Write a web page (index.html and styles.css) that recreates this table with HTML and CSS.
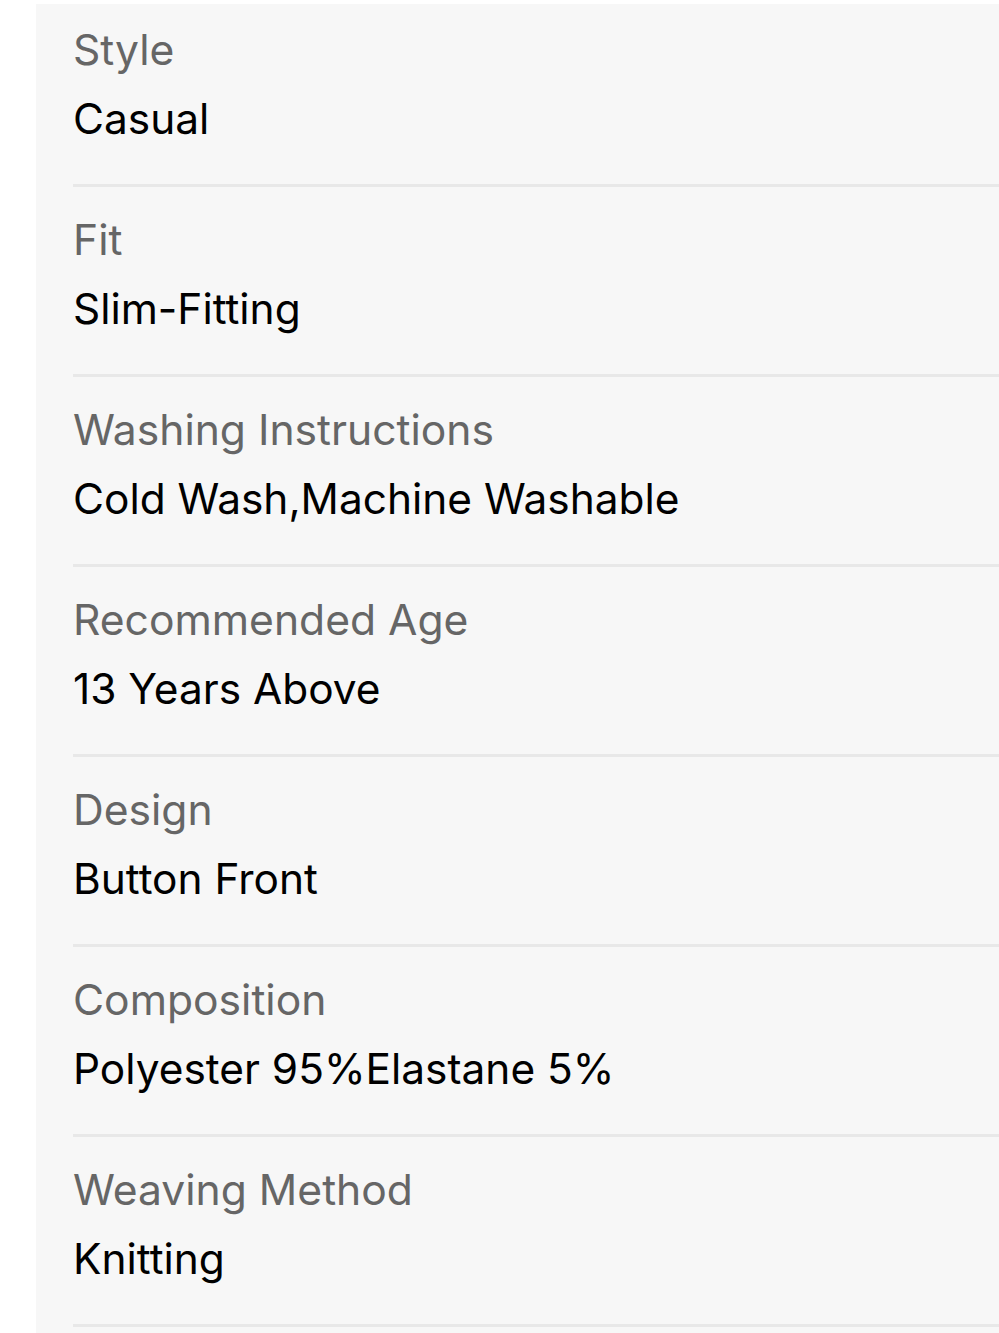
FILE: index.html
```html
<!DOCTYPE html>
<html lang="en">
<head>
    <meta charset="UTF-8">
    <meta name="viewport" content="width=device-width, initial-scale=1.0">
    <title>Product Details</title>
    <link rel="stylesheet" href="styles.css">
</head>
<body>
    <div class="details">
        <div class="row">
            <div class="label">Style</div>
            <div class="value">Casual</div>
        </div>
        <div class="row">
            <div class="label">Fit</div>
            <div class="value">Slim-Fitting</div>
        </div>
        <div class="row">
            <div class="label">Washing Instructions</div>
            <div class="value">Cold Wash,Machine Washable</div>
        </div>
        <div class="row">
            <div class="label">Recommended Age</div>
            <div class="value">13 Years Above</div>
        </div>
        <div class="row">
            <div class="label">Design</div>
            <div class="value">Button Front</div>
        </div>
        <div class="row">
            <div class="label">Composition</div>
            <div class="value">Polyester 95%Elastane 5%</div>
        </div>
        <div class="row">
            <div class="label">Weaving Method</div>
            <div class="value">Knitting</div>
        </div>
    </div>
</body>
</html>
```

FILE: styles.css
```css
/* General */
body {
    margin: 0;
    padding: 0;
    background-color: #ffffff;
    font-family: 'Inter', 'Noto Sans', sans-serif;
}

/* Panel */
.details {
    margin: 4px 0 0 36px;
    padding-left: 37px;
    background-color: #f7f7f7;
    padding-bottom: 6px;
}

.row {
    padding: 18px 0 31px;
    border-bottom: 3px solid #e8e8e8;
}

.row:first-child {
    padding-top: 11px;
}

.label {
    font-size: 42.6px;
    line-height: 69px;
    color: #666666;
}

.value {
    font-size: 42.4px;
    line-height: 69px;
    color: #000000;
}
```
